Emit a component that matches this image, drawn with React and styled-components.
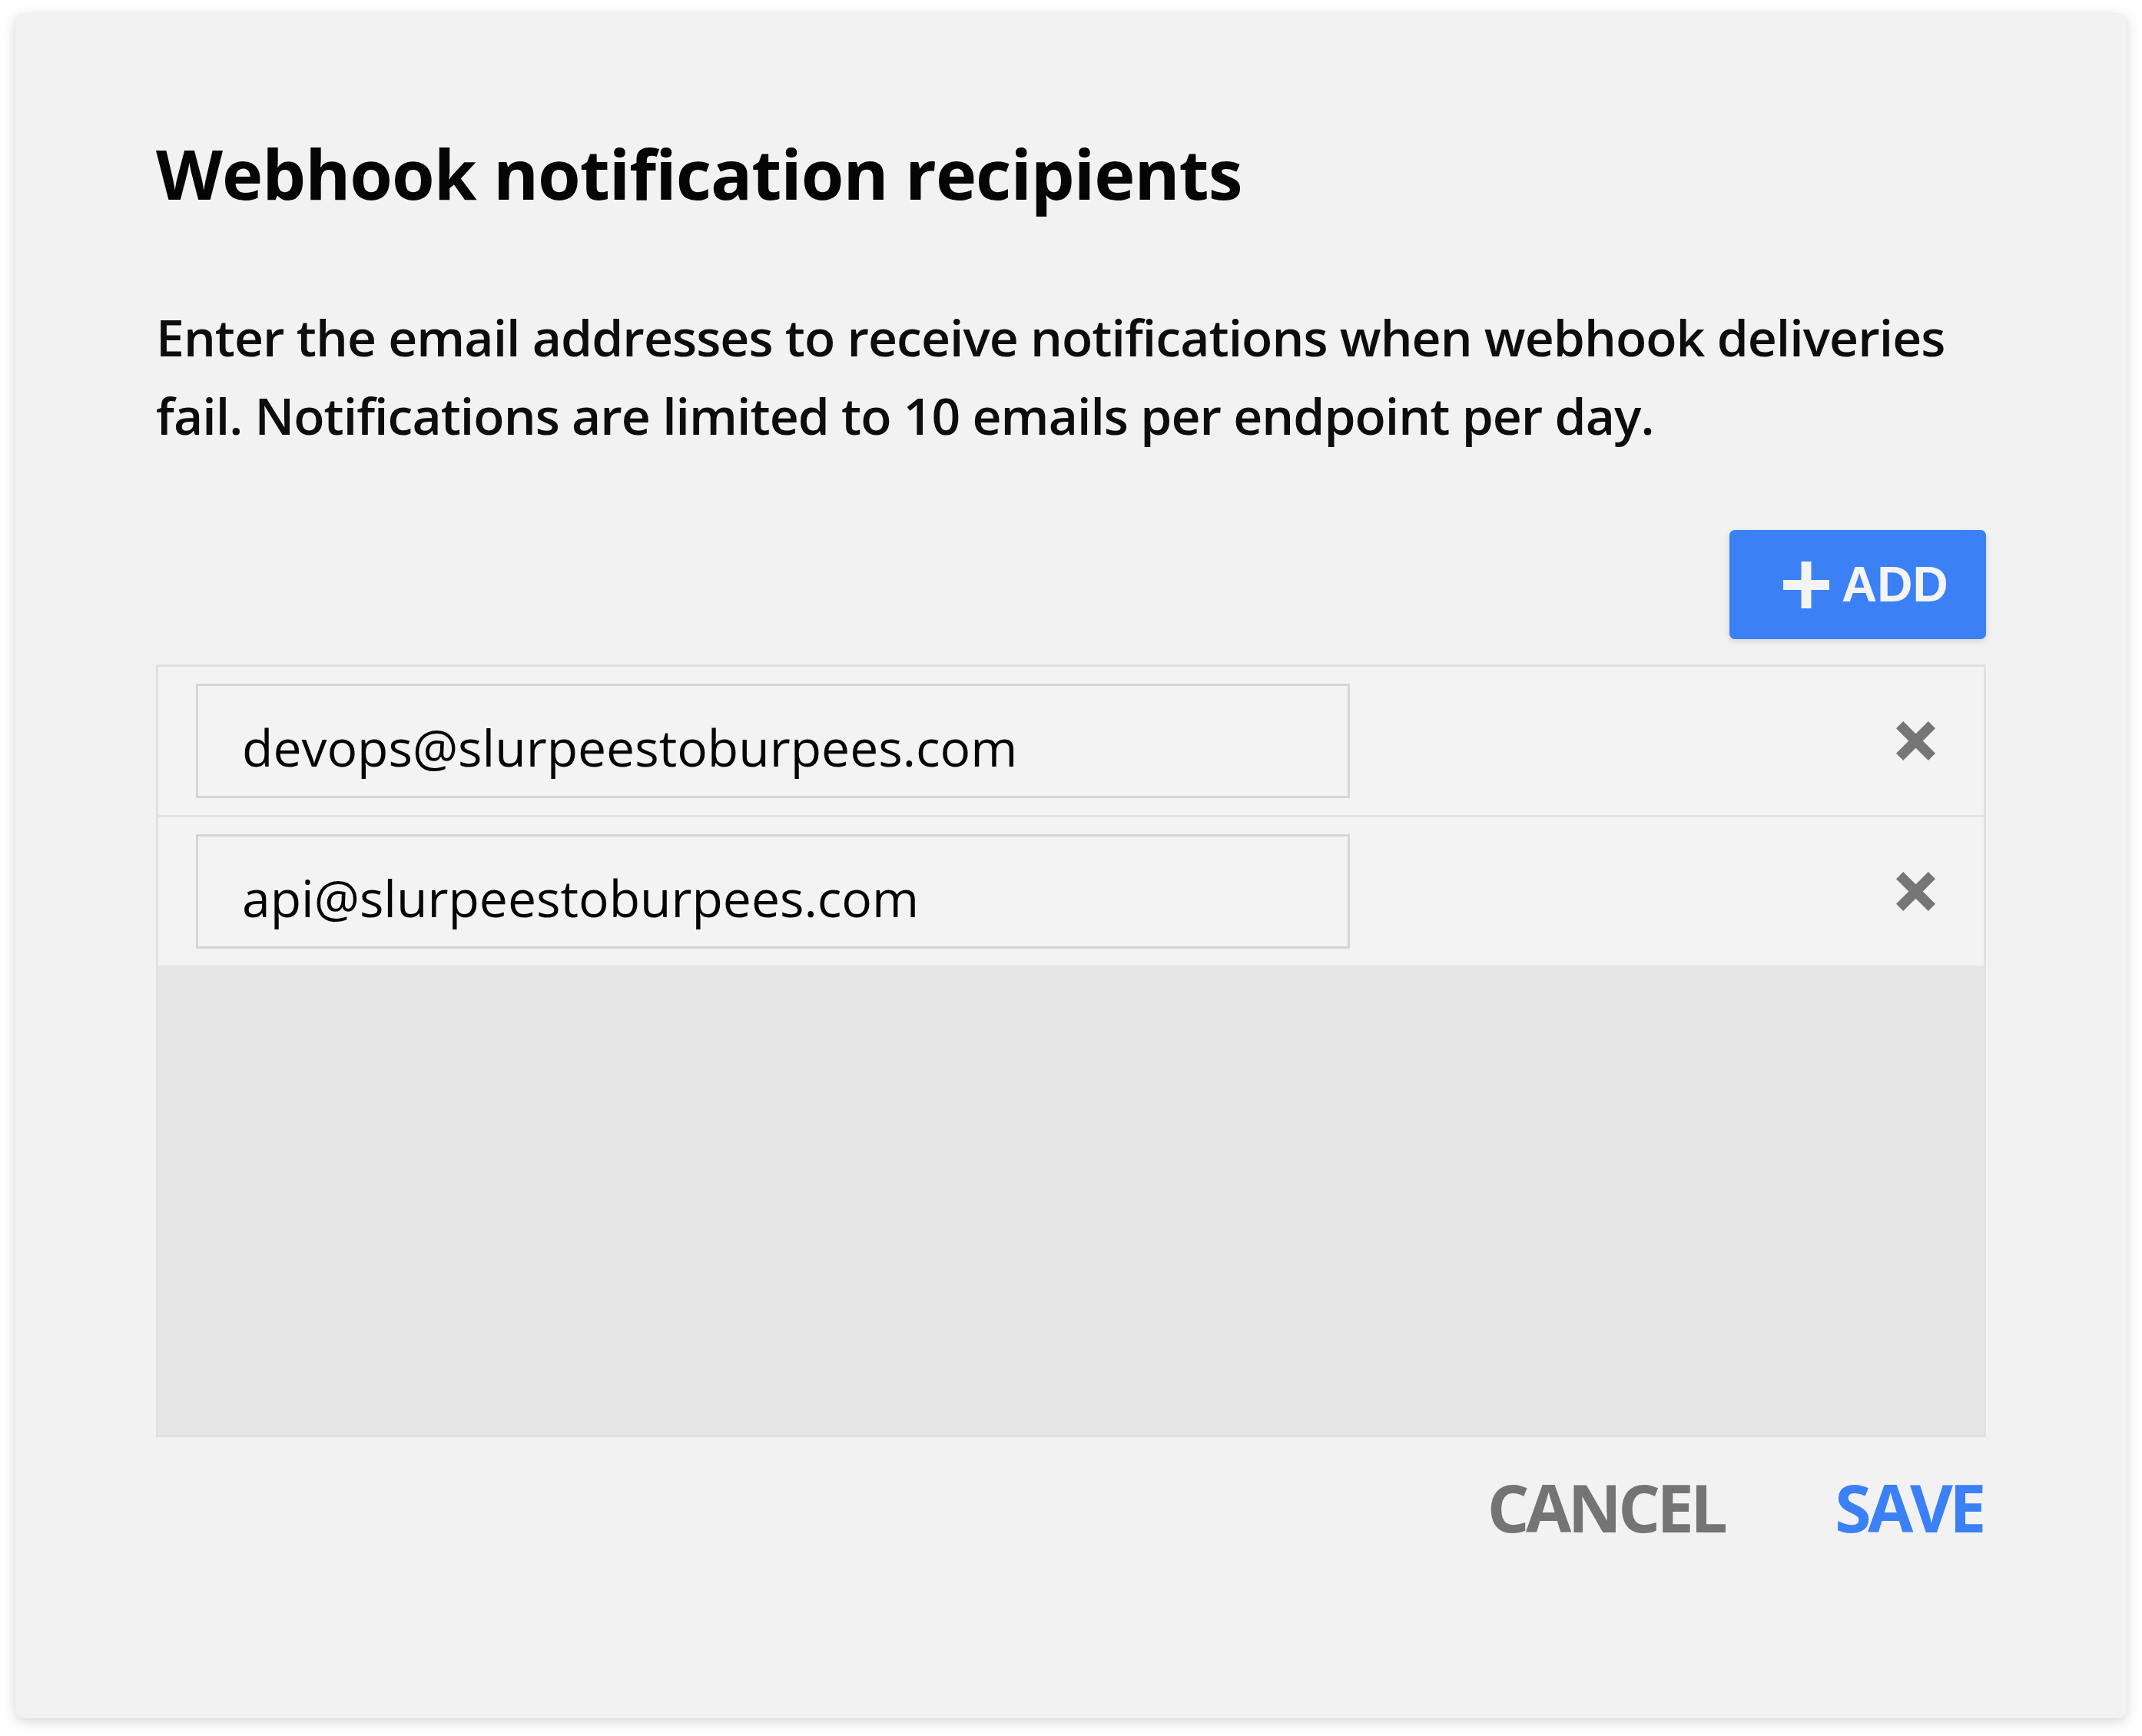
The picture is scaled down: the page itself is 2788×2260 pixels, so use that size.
import React from 'react';
import styled, { createGlobalStyle } from 'styled-components';

const GlobalStyle = createGlobalStyle`
  html, body {
    margin: 0;
    padding: 0;
    background: #ffffff;
  }
  body {
    font-family: "Open Sans", "Noto Sans", sans-serif;
  }
`;

const Page = styled.div`
  padding: 18px 20px 23px;
`;

const Card = styled.div`
  background-color: #f2f2f2;
  border-radius: 10px;
  box-shadow: 0 4px 18px rgba(0, 0, 0, 0.16), 0 0 3px rgba(0, 0, 0, 0.06);
  padding: 147px 183px 215px;
  display: flex;
  flex-direction: column;
`;

const Title = styled.h1`
  margin: 0;
  font-size: 90px;
  line-height: 120px;
  font-weight: 700;
  letter-spacing: -1px;
  color: #050505;
`;

const Description = styled.p`
  margin: 102px 0 0;
  font-size: 66px;
  line-height: 102px;
  font-weight: 600;
  letter-spacing: -0.95px;
  color: #0d0d0d;
`;

const Toolbar = styled.div`
  display: flex;
  justify-content: flex-end;
  margin-top: 99px;
`;

const AddButton = styled.button`
  width: 334px;
  height: 142px;
  box-sizing: border-box;
  padding: 0 0 0 70px;
  display: flex;
  align-items: center;
  gap: 16px;
  border: none;
  border-radius: 7px;
  background-color: #3b80f5;
  box-shadow: 0 3px 8px rgba(0, 0, 0, 0.12);
  color: #f4f4f4;
  font-family: "Liberation Sans", Arial, sans-serif;
  font-size: 64px;
  font-weight: 700;
  cursor: pointer;
`;

const RecipientList = styled.div`
  margin-top: 33px;
  height: 1006px;
  box-sizing: border-box;
  border: 3px solid #e1e1e1;
  background-color: #e6e6e6;
  display: flex;
  flex-direction: column;
`;

const Row = styled.div`
  display: flex;
  align-items: center;
  justify-content: space-between;
  padding: 22px 63px 22px 49px;
  background-color: #f3f3f3;
  border-bottom: ${p => (p.last ? 'none' : '3px solid #e6e6e6')};
`;

const EmailInput = styled.input`
  width: 1502px;
  height: 149px;
  box-sizing: border-box;
  border: 3px solid #d5d5d5;
  background-color: #f3f3f3;
  padding: 14px 0 0 57px;
  font-family: "Open Sans", "Noto Sans", sans-serif;
  font-size: 66px;
  font-weight: 500;
  color: #050505;
  outline: none;
`;

const RemoveButton = styled.button`
  width: 51px;
  height: 51px;
  padding: 0;
  border: none;
  background: none;
  display: flex;
  cursor: pointer;
`;

const Footer = styled.div`
  display: flex;
  justify-content: flex-end;
  gap: 144px;
  margin-top: 31px;
  padding-right: 4px;
`;

const TextButton = styled.button`
  padding: 0;
  border: none;
  background: none;
  font-family: "Open Sans", "Noto Sans", sans-serif;
  font-size: 86px;
  line-height: 120px;
  font-weight: 700;
  letter-spacing: -4.5px;
  color: ${p => (p.primary ? '#3b80f5' : '#747474')};
  cursor: pointer;
`;

const PlusIcon = () => (
  <svg width="60" height="61" viewBox="0 0 60 61">
    <rect x="23.5" y="0" width="13" height="61" fill="#f4f4f4" />
    <rect x="0" y="24" width="60" height="13" fill="#f4f4f4" />
  </svg>
);

const CloseIcon = () => (
  <svg width="51" height="51" viewBox="0 0 51 51">
    <path d="M4.6 4.6 L46.4 46.4 M46.4 4.6 L4.6 46.4" stroke="#767676" strokeWidth="13" />
  </svg>
);

const recipients = ['devops@slurpeestoburpees.com', 'api@slurpeestoburpees.com'];

const App = () => {
  return (
    <Page>
      <GlobalStyle />
      <Card>
        <Title>Webhook notification recipients</Title>
        <Description>
          Enter the email addresses to receive notifications when webhook deliveries
          fail. Notifications are limited to 10 emails per endpoint per day.
        </Description>
        <Toolbar>
          <AddButton>
            <PlusIcon />
            ADD
          </AddButton>
        </Toolbar>
        <RecipientList>
          {recipients.map((email, i) => (
            <Row key={email} last={i === recipients.length - 1}>
              <EmailInput defaultValue={email} readOnly />
              <RemoveButton aria-label="Remove">
                <CloseIcon />
              </RemoveButton>
            </Row>
          ))}
        </RecipientList>
        <Footer>
          <TextButton>CANCEL</TextButton>
          <TextButton primary>SAVE</TextButton>
        </Footer>
      </Card>
    </Page>
  );
};

export default App;
